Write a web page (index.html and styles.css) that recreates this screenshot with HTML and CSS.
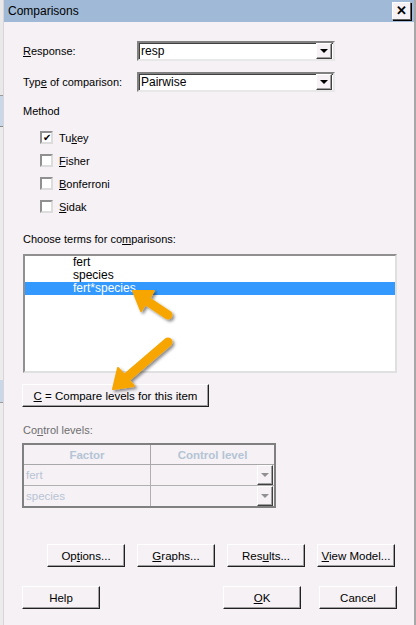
FILE: index.html
```html
<!DOCTYPE html>
<html lang="en">
<head>
    <meta charset="UTF-8">
    <title>Comparisons</title>
    <link rel="stylesheet" href="styles.css">
</head>
<body>
    <!-- Fenêtre derrière -->
    <div class="behind"></div>

    <!-- Boîte de dialogue -->
    <div class="dialog">
        <div class="titlebar">
            <span class="title">Comparisons</span>
            <span class="close">&#x2715;</span>
        </div>

        <div class="content">
            <div class="field first">
                <label><u>R</u>esponse:</label>
                <div class="combo"><span>resp</span><span class="drop"><i></i></span></div>
            </div>
            <div class="field">
                <label>Typ<u>e</u> of comparison:</label>
                <div class="combo"><span>Pairwise</span><span class="drop"><i></i></span></div>
            </div>

            <div class="section">Method</div>
            <div class="checks">
                <div class="check"><span class="box checked">&#x2714;</span><span>Tu<u>k</u>ey</span></div>
                <div class="check"><span class="box"></span><span><u>F</u>isher</span></div>
                <div class="check"><span class="box"></span><span><u>B</u>onferroni</span></div>
                <div class="check"><span class="box"></span><span><u>S</u>idak</span></div>
            </div>

            <div class="section terms">Choose terms for co<u>m</u>parisons:</div>
            <div class="listbox">
                <div class="item">fert</div>
                <div class="item">species</div>
                <div class="item selected">fert*species</div>
            </div>

            <button class="btn compare"><u>C</u> = Compare levels for this item</button>

            <div class="section disabled">Co<u>n</u>trol levels:</div>
            <table class="grid">
                <tr><th class="col1">Factor</th><th>Control level</th></tr>
                <tr><td>fert</td><td class="cell-drop"><span class="drop gray"><i></i></span></td></tr>
                <tr><td>species</td><td class="cell-drop"><span class="drop gray"><i></i></span></td></tr>
            </table>

            <div class="buttons row1">
                <button class="btn">Op<u>t</u>ions...</button>
                <button class="btn"><u>G</u>raphs...</button>
                <button class="btn">Res<u>u</u>lts...</button>
                <button class="btn"><u>V</u>iew Model...</button>
            </div>
            <div class="buttons row2">
                <button class="btn">Help</button>
                <span class="spacer"></span>
                <button class="btn"><u>O</u>K</button>
                <button class="btn">Cancel</button>
            </div>
        </div>
    </div>

    <!-- Flèches d'annotation -->
    <svg class="arrows" width="416" height="625" viewBox="0 0 416 625">
        <defs>
            <filter id="shadow" x="-20%" y="-20%" width="140%" height="140%">
                <feDropShadow dx="2" dy="2" stdDeviation="1.5" flood-color="#000" flood-opacity="0.45"/>
            </filter>
        </defs>
        <g fill="#f7a500" stroke="#f7a500" filter="url(#shadow)">
            <line x1="168" y1="315" x2="147" y2="301" stroke-width="9" stroke-linecap="round"/>
            <polygon points="133,291 154,291 141,311" stroke-width="2" stroke-linejoin="round"/>
            <line x1="168" y1="342" x2="126" y2="378" stroke-width="9" stroke-linecap="round"/>
            <polygon points="113,389 118,368 134,386" stroke-width="2" stroke-linejoin="round"/>
        </g>
    </svg>
</body>
</html>
```

FILE: styles.css
```css
/* Base */
body {
    margin: 0;
    width: 416px;
    height: 625px;
    display: flex;
    overflow: hidden;
    font-family: 'Liberation Sans', Arial, sans-serif;
    font-size: 11px;
    color: #000000;
    position: relative;
}

/* Bord de la fenêtre en arrière-plan */
.behind {
    width: 3px;
    flex: none;
    background:
        linear-gradient(#e9e9e9 0 95px, #9a9a9a 95px 96px, #c8d8e8 96px 126px, #8a8a8a 126px 127px,
            #ececec 127px 380px, #c8d8e8 380px 402px, #9a9a9a 402px 403px, #ececec 403px);
}

/* Dialogue */
.dialog {
    flex: 1;
    background: #f5f1f5;
    border-left: 1px solid #d8d4d8;
    border-right: 2px solid #a8a8a8;
    display: flex;
    flex-direction: column;
}

.titlebar {
    height: 22px;
    background: #9fb9d7;
    display: flex;
    align-items: center;
    justify-content: space-between;
    padding: 0 3px 0 4px;
}

.title {
    font-size: 12px;
}

.close {
    width: 17px;
    height: 16px;
    background: #f5f1f5;
    border: 1px solid;
    border-color: #ffffff #606060 #606060 #ffffff;
    box-shadow: 1px 1px 0 #000;
    font-size: 13px;
    font-weight: bold;
    line-height: 16px;
    text-align: center;
}

.content {
    padding: 0 17px 0 19px;
    display: flex;
    flex-direction: column;
}

/* Champs */
.field {
    display: flex;
    align-items: center;
    margin-top: 11px;
}

.field.first {
    margin-top: 19px;
}

.field label {
    width: 114px;
}

.combo {
    width: 192px;
    height: 16px;
    background: #ffffff;
    border: 2px solid;
    border-color: #808080 #e8e8e8 #e8e8e8 #808080;
    box-shadow: inset 1px 1px 0 #404040;
    display: flex;
    align-items: center;
    justify-content: space-between;
    padding-left: 2px;
    font-size: 12px;
}

.drop {
    width: 14px;
    height: 14px;
    margin-right: 1px;
    background: #f5f1f5;
    border: 1px solid;
    border-color: #ffffff #404040 #404040 #ffffff;
    box-shadow: inset -1px -1px 0 #a0a0a0;
    display: flex;
    align-items: center;
    justify-content: center;
}

.drop i {
    border-left: 4px solid transparent;
    border-right: 4px solid transparent;
    border-top: 4px solid #000000;
}

.drop.gray i {
    border-top-color: #909090;
}

/* Méthode */
.section {
    margin-top: 13px;
    height: 13px;
    line-height: 13px;
}

.checks {
    display: flex;
    flex-direction: column;
    gap: 10px;
    padding-left: 17px;
    margin-top: 13px;
}

.check {
    display: flex;
    align-items: center;
    height: 13px;
    gap: 6px;
}

.box {
    width: 9px;
    height: 9px;
    background: #ffffff;
    border: 2px solid;
    border-color: #909090 #dcdcdc #dcdcdc #909090;
    font-size: 10px;
    line-height: 9px;
    text-align: center;
}

.section.terms {
    margin-top: 20px;
}

/* Liste */
.listbox {
    margin-top: 8px;
    height: 115px;
    background: #ffffff;
    border: 2px solid;
    border-color: #909090 #e0e0e0 #e0e0e0 #909090;
    font-size: 12px;
}

.item {
    height: 13px;
    line-height: 13px;
    padding-left: 48px;
}

.item.selected {
    background: #3399ff;
    color: #ffffff;
}

/* Boutons */
.btn {
    font-family: inherit;
    font-size: 11.5px;
    color: #000000;
    height: 23px;
    background: #f5f1f5;
    border: 1px solid;
    border-color: #ffffff #202020 #202020 #ffffff;
    box-shadow: inset -1px -1px 0 #a0a0a0;
    padding: 0;
}

.btn.compare {
    margin-top: 11px;
    width: 187px;
    margin-left: -1px;
}

.section.disabled {
    color: #6e6e6e;
    margin-top: 17px;
}

/* Tableau des niveaux */
.grid {
    margin-top: 6px;
    margin-left: -1px;
    width: 254px;
    border-collapse: collapse;
    border: 2px solid #808080;
    color: #b8c4d4;
    font-size: 11.5px;
}

.grid th {
    height: 17px;
    font-weight: bold;
    color: #b4c4d4;
    border: 1px solid #a8a8a8;
    border-top: 1px solid #ffffff;
}

.grid th.col1 {
    width: 124px;
}

.grid td {
    height: 20px;
    padding: 0 0 0 2px;
    border: 1px solid #b0b0b0;
}

.grid td.cell-drop {
    padding: 0;
}

.grid td .drop {
    margin-left: auto;
    height: 18px;
}

/* Rangées du bas */
.buttons {
    display: flex;
    gap: 12px;
}

.buttons .btn {
    width: 78px;
}

.row1 {
    margin-top: 36px;
    padding-left: 24px;
}

.row2 {
    margin-top: 19px;
    margin-left: -1px;
}

.spacer {
    flex: 1;
}

.row2 .btn:last-child {
    margin-left: 6px;
}

/* Flèches */
.arrows {
    position: absolute;
    left: 0;
    top: 0;
    pointer-events: none;
}
```
